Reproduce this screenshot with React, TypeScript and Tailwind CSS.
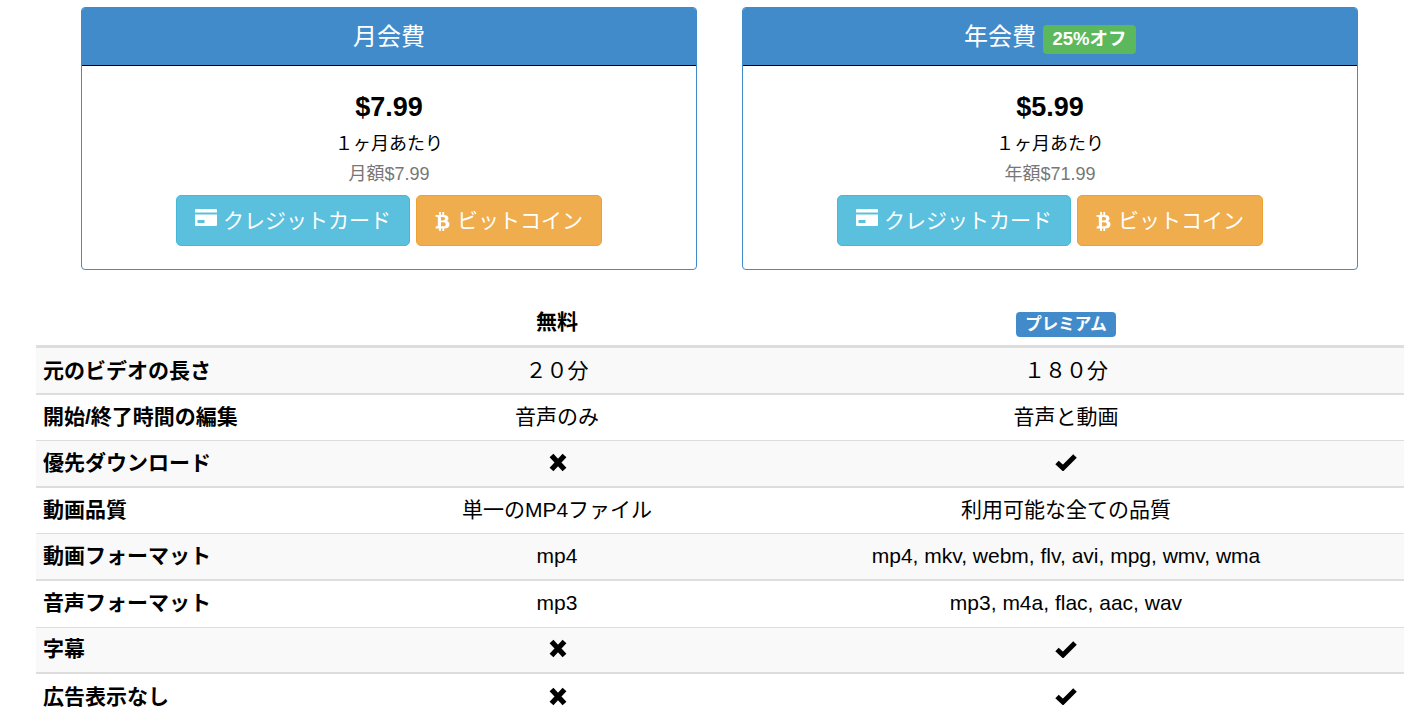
import type { ReactNode } from "react";
import { FaBtc } from "react-icons/fa";

const font = "font-['Liberation_Sans','Noto_Sans_CJK_JP',sans-serif]";

function CardIcon() {
  return (
    <svg width="22" height="17" viewBox="0 0 22 17" className="mr-[6px] mb-[6px] shrink-0">
      <path
        fill="currentColor"
        fillRule="evenodd"
        d="M1 0h20a1 1 0 0 1 1 1v15a1 1 0 0 1-1 1H1a1 1 0 0 1-1-1V1a1 1 0 0 1 1-1zM0 3.500v2h22v-2zM2.500 11v3h7v-3z"
      />
    </svg>
  );
}

function Cross() {
  return (
    <svg width="20" height="19" viewBox="0 0 20 19" className="inline-block ml-[1px]">
      <path d="M3.500 2.500 16.500 16.500M16.500 2.500 3.500 16.500" stroke="currentColor" strokeWidth="5.200" fill="none" />
    </svg>
  );
}

function Check() {
  return (
    <svg width="22" height="18" viewBox="0 0 22 18" className="inline-block">
      <path d="M2 9.500 8 15 20 3" stroke="currentColor" strokeWidth="5" fill="none" />
    </svg>
  );
}

function PlanCard({ title, badge, price, yearly }: { title: string; badge?: string; price: string; yearly: string }) {
  return (
    <div className="w-[616px] h-[263px] rounded border border-[#428bca] overflow-hidden bg-white">
      <div className="h-[58px] bg-[#428bca] border-b border-black flex items-center justify-center text-white text-[24px]">
        {title}
        {badge && (
          <span className="ml-[7px] mt-[6px] px-[9.5px] h-[29px] leading-[27px] rounded bg-[#5cb85c] text-[18.5px] font-bold">{badge}</span>
        )}
      </div>
      <div className="flex flex-col items-center">
        <div className="mt-[24px] text-[27px] leading-[34px] font-bold text-black">{price}</div>
        <div className="mt-[8px] text-[18px] leading-[24px] text-black">１ヶ月あたり</div>
        <div className="mt-[7px] text-[18px] leading-[22px] text-[#777]">{yearly}</div>
        <div className="mt-[10px] flex gap-[6px]">
          <button className="h-[51px] px-[18px] rounded-[5px] border border-[#46b8da] bg-[#5bc0de] text-white text-[21px] flex items-center">
            <CardIcon />クレジットカード
          </button>
          <button className="h-[51px] px-[18px] rounded-[5px] border border-[#eea236] bg-[#f0ad4e] text-white text-[21px] flex items-center">
            <FaBtc size={19} className="mr-[5px] -ml-[2px] mt-[2px] shrink-0" />ビットコイン
          </button>
        </div>
      </div>
    </div>
  );
}

const rows: { label: string; free: ReactNode; premium: ReactNode }[] = [
  { label: "元のビデオの長さ", free: "２０分", premium: "１８０分" },
  { label: "開始/終了時間の編集", free: "音声のみ", premium: "音声と動画" },
  { label: "優先ダウンロード", free: <Cross />, premium: <Check /> },
  { label: "動画品質", free: "単一のMP4ファイル", premium: "利用可能な全ての品質" },
  { label: "動画フォーマット", free: "mp4", premium: "mp4, mkv, webm, flv, avi, mpg, wmv, wma" },
  { label: "音声フォーマット", free: "mp3", premium: "mp3, m4a, flac, aac, wav" },
  { label: "字幕", free: <Cross />, premium: <Check /> },
  { label: "広告表示なし", free: <Cross />, premium: <Check /> },
];

export default function App() {
  return (
    <div className={`${font} h-[725px] overflow-hidden bg-white text-black`}>
      <div className="pt-[7px] pl-[81px] flex gap-[45px]">
        <PlanCard title="月会費" price="$7.99" yearly="月額$7.99" />
        <PlanCard title="年会費" badge="25%オフ" price="$5.99" yearly="年額$71.99" />
      </div>
      <div className="mt-[29px] ml-[36px] w-[1368px]">
        <div className="grid grid-cols-[350px_342px_676px] h-[49px] items-center border-b-[3px] border-[#ddd] text-center text-[21px] font-bold">
          <div />
          <div>無料</div>
          <div>
            <span className="inline-block mt-[6px] px-[9px] h-[25px] leading-[25px] rounded bg-[#428bca] text-white text-[16.5px] align-top">プレミアム</span>
          </div>
        </div>
        {/* rows land on fractional pixels in the original, so the rule alternates 2px / 1px */}
        {rows.map((row, i) => (
          <div
            key={row.label}
            className={`grid grid-cols-[350px_342px_676px] h-[46.6px] items-center text-center text-[21px] ${
              i % 2 === 0 ? "bg-[#f9f9f9] border-b-2" : "bg-white border-b"
            } ${i === rows.length - 1 ? "border-b-0" : "border-[#ddd]"} ${i === 0 ? "" : "pb-[2px]"}`}
          >
            <div className="pl-[7px] text-left font-bold">{row.label}</div>
            <div className="flex justify-center">{row.free}</div>
            <div className="flex justify-center">{row.premium}</div>
          </div>
        ))}
      </div>
    </div>
  );
}
